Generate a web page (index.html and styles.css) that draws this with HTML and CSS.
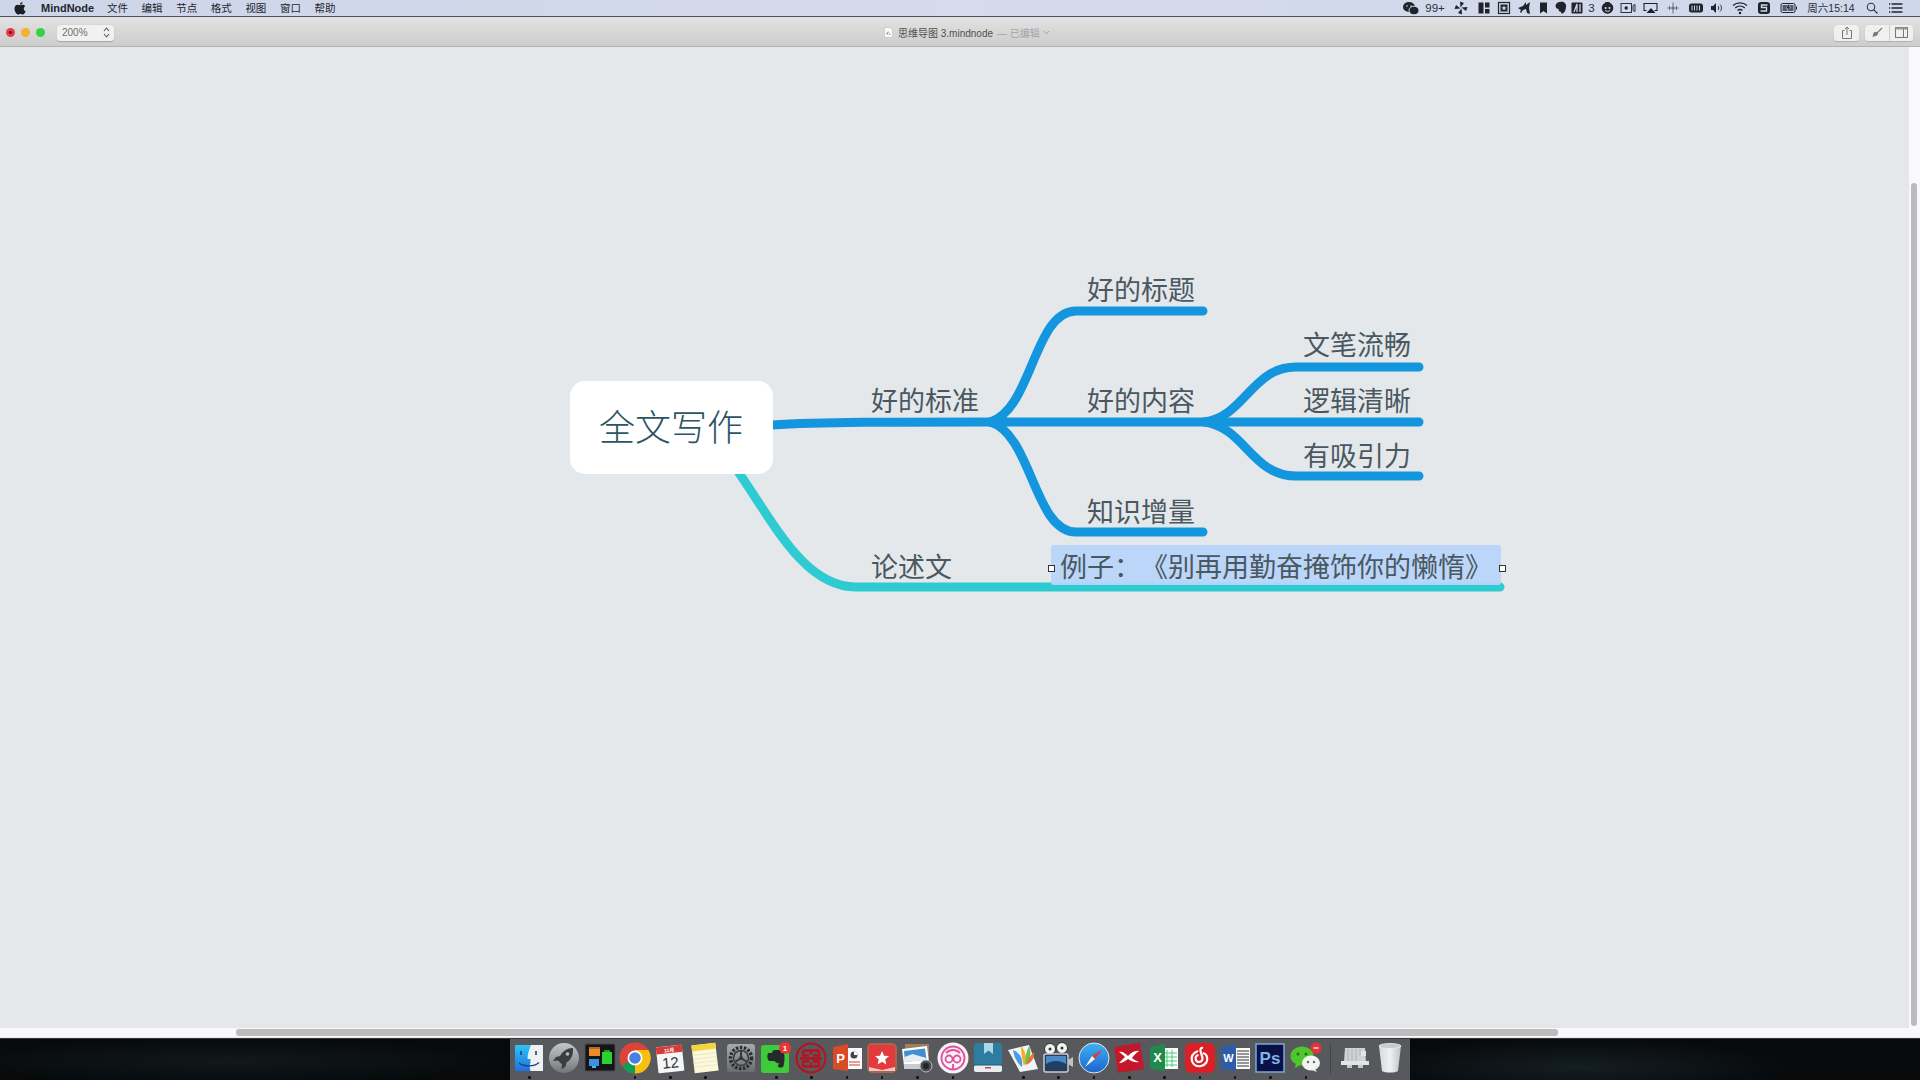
FILE: index.html
```html
<!DOCTYPE html>
<html lang="zh-CN">
<head>
<meta charset="utf-8">
<title>MindNode</title>
<link rel="stylesheet" href="styles.css">
</head>
<body>
<div class="screen">
  <header class="menubar">
    <svg class="apple" width="12" height="14" viewBox="0 0 24 28"><path fill="#1c1e26" d="M17 2c0 2.500-2.200 5.500-5 5.300C11.700 4.600 14.300 2 17 2zM12.200 8.600c1.300 0 2.800-1.200 5-1.200 2.300 0 4.200 1.100 5.300 2.900-4.300 2.500-3.600 8.400.8 10.100-1.200 3-3.500 6.600-5.700 6.600-1.700 0-2.400-1.100-4.600-1.100s-3 1.100-4.600 1.100C5.200 26.900 1 20.800 1 15.300c0-5 3.200-7.800 6.400-7.800 2 0 3.600 1.100 4.800 1.100z"/></svg>
    <span class="menu-app">MindNode</span>
    <nav class="menu-items"><span>文件</span><span>编辑</span><span>节点</span><span>格式</span><span>视图</span><span>窗口</span><span>帮助</span></nav>
    <div class="status">
      <svg width="22" height="16" viewBox="-11 -8 22 16"><ellipse cx="-2" cy="-1" rx="6" ry="5" fill="#20232b"/><ellipse cx="3" cy="2.500" rx="5" ry="4.300" fill="#20232b" stroke="#cdd5e8"/><circle cx="-4" cy="-2" r=".8" fill="#cdd5e8"/><circle cx="0" cy="-2" r=".8" fill="#cdd5e8"/></svg>
      <span class="st-text st-99">99+</span>
      <svg width="26" height="16" viewBox="-13 -8 26 16"><g fill="#20232b"><path d="M-.5-.5L-1-6.500 3-5z"/><path d="M.5-.5L6.500-1 5 3z"/><path d="M.5.500L1 6.500-3 5z"/><path d="M-.5.500L-6.500 1-5-3z"/></g></svg>
      <svg width="20" height="16" viewBox="-10 -8 20 16"><path fill="#20232b" d="M-5.500-5.500h5v11h-5zM1-5.500h4.500v5H1zM1 1h4.500v4.500H1z"/></svg>
      <svg width="20" height="16" viewBox="-10 -8 20 16"><rect x="-5.500" y="-5.500" width="11" height="11" fill="none" stroke="#20232b" stroke-width="1.200"/><rect x="-3.500" y="-3.500" width="7" height="7" fill="#20232b"/><path fill="#cdd5e8" d="M0-2.500l.8 1.700 1.700.2-1.300 1.100.4 1.700L0 1.300l-1.600.9.400-1.700-1.300-1.100 1.700-.2z"/></svg>
      <svg width="20" height="16" viewBox="-10 -8 20 16"><path fill="#20232b" d="M-6 0l5-2 3-4v3l4-3-1 6 1 6-3-1-1-4-3 1-2 3-1-1 1-2z"/></svg>
      <svg width="19" height="16" viewBox="-9.500 -8 19 16"><path fill="#20232b" d="M-3.500-5.500h7v11l-3.500-2.500-3.500 2.500z"/></svg>
      <svg width="15" height="16" viewBox="-7.500 -8 15 16"><path fill="#20232b" d="M-5-3c1-3 5-4 8-3 2 1 3 3 2.500 5C5 3 4 5 2 5.500c-1.500.3-2-.8-1-1.500-2 0-3-1-3-3-1.500 0-3-1-3-4z"/></svg>
      <svg width="18" height="16" viewBox="-9 -8 18 16"><rect x="-5.500" y="-5.500" width="11" height="11" rx="1" fill="#20232b"/><path d="M-3 4L0-4v8M3-4v8" stroke="#cdd5e8" stroke-width="1.300" fill="none"/></svg>
      <span class="st-text st-3">3</span>
      <svg width="21" height="16" viewBox="-10.500 -8 21 16"><circle r="5.800" fill="#20232b"/><circle cx="-1.800" cy="0" r="1.100" fill="#cdd5e8"/><circle cx="2" cy="0" r="1.100" fill="#cdd5e8"/><path d="M-2.500 2.500c1 1 4 1 5 0" stroke="#cdd5e8" fill="none"/><path d="M-2-6l2 2 2-2" fill="#20232b" stroke="#20232b"/></svg>
      <svg width="20" height="16" viewBox="-10 -8 20 16"><rect x="-7" y="-4.500" width="10.500" height="9" fill="none" stroke="#30333c"/><circle cx="-1.800" r="1.700" fill="#20232b"/><path d="M5-2.500l2-1v7l-2-1z" fill="none" stroke="#30333c"/></svg>
      <svg width="26" height="16" viewBox="-13 -8 26 16"><path d="M-4 2.500h-2.500v-7h13v7H4" fill="none" stroke="#20232b" stroke-width="1.100" transform="translate(-.5 0)"/><path fill="#20232b" d="M0 0l4.500 5h-9z"/></svg>
      <svg width="18" height="16" viewBox="-9 -8 18 16"><path d="M0-5.500v11M-3.500-2v4M3.500-2v4M-5.500 0h11" stroke="#6b7180" stroke-width="1"/><circle r="1.500" fill="#6b7180"/></svg>
      <svg width="28" height="16" viewBox="-14 -8 28 16"><rect x="-7" y="-4.500" width="14" height="9" rx="2.500" fill="#20232b"/><path d="M-4-2.500v5M-1.500-2.500v5M1-2.500v5M3.500-2.500v5" stroke="#cdd5e8"/></svg>
      <svg width="14" height="16" viewBox="-7 -8 14 16"><path fill="#20232b" d="M-6-2h2l3-3v10l-3-3h-2z"/><path d="M1-2c1 1 1 3 0 4M3-3.500c2 2 2 5 0 7" fill="none" stroke="#20232b" stroke-width=".9"/></svg>
      <svg width="32" height="16" viewBox="-16 -8 32 16"><g fill="none" stroke="#20232b" stroke-width="1.300"><path d="M-7-2.500c4-3.500 10-3.500 14 0"/><path d="M-4.800 0c2.800-2.400 6.800-2.400 9.600 0"/><path d="M-2.500 2.500c1.500-1.200 3.500-1.200 5 0"/></g><circle cy="5" r="1.300" fill="#20232b"/></svg>
      <svg width="16" height="16" viewBox="-8 -8 16 16"><rect x="-6" y="-6" width="12" height="12" rx="3" fill="#20232b"/><path d="M3.500-3h-6v2.500h5V3h-6" fill="none" stroke="#cdd5e8" stroke-width="1.400"/></svg>
      <svg width="34" height="16" viewBox="-17 -8 34 16"><rect x="-8" y="-4.500" width="14" height="9" rx="1.500" fill="none" stroke="#20232b"/><rect x="-6.500" y="-3" width="11" height="6" fill="#565a66"/><path d="M-1-3.500L-3 .5h2l-1 3 4-4.500H0l1-2.500z" fill="#20232b" stroke="#cdd5e8" stroke-width=".5"/><path d="M7-1.500h1v3H7z" fill="#20232b"/></svg>
      <span class="st-text st-clock">周六15:14</span>
      <svg width="32" height="16" viewBox="-16 -8 32 16"><circle cx="-1" cy="-1" r="3.700" fill="none" stroke="#30333c" stroke-width="1.100"/><path d="M1.800 1.800L5.500 5.500" stroke="#30333c" stroke-width="1.200"/></svg>
      <svg width="16" height="16" viewBox="-8 -8 16 16"><path d="M-7-4h1.200M-4.500-4h11M-7 0h1.200M-4.500 0h11M-7 4h1.200M-4.500 4h11" stroke="#20232b" stroke-width="1.300"/></svg>
    </div>
  </header>

  <div class="toolbar">
    <div class="traffic"><i class="light red"></i><i class="light amber"></i><i class="light green"></i></div>
    <div class="zoom-box"><span>200%</span><svg width="7" height="11" viewBox="0 0 7 11"><path d="M1 4l2.500-3L6 4M1 7l2.500 3L6 7" fill="none" stroke="#55585c" stroke-width="1.100"/></svg></div>
    <div class="doc-title">
      <svg width="9" height="11" viewBox="0 0 9 11"><path d="M.5.500h5.500l2.500 2.500v7.500h-8z" fill="#fbfbfb" stroke="#bdbdbd" stroke-width=".6"/><path d="M3 7l1-3 1 1.500z" fill="#e8a33d"/><path d="M4 8l-2-2 1.500-.5z" fill="#3b8fd6"/><path d="M4.500 8l2-2.500-.5 2.500z" fill="#5fb54a"/></svg>
      <span class="doc-name">思维导图 3.mindnode</span><span class="doc-state">— 已编辑</span>
      <svg width="7" height="5" viewBox="0 0 7 5"><path d="M.8 1l2.700 2.700L6.200 1" fill="none" stroke="#a0a0a0"/></svg>
    </div>
    <div class="tool-right">
      <div class="tool-btn btn-share"><svg width="12" height="13" viewBox="0 0 12 13"><path d="M3.500 4.500H1.500v8h9v-8h-2M6 9V1M4 3l2-2 2 2" fill="none" stroke="#7a7a7a"/></svg></div>
      <div class="tool-group">
        <div class="tool-btn btn-brush"><svg width="12" height="12" viewBox="0 0 12 12"><path d="M11 1L6 6" stroke="#777" stroke-width="1.100"/><path d="M6.500 5.500c1 1 .5 2-.3 2.800-1 1-3 .8-4.700 1.700.5-1.500.4-3.200 1.400-4.500 1-1 2.600-1 3.600 0z" fill="#7c7c7c"/></svg></div>
        <div class="tool-btn btn-panel"><svg width="13" height="11" viewBox="0 0 13 11"><rect x=".5" y=".5" width="12" height="10" fill="none" stroke="#777"/><rect x=".5" y=".5" width="12" height="2" fill="#999"/><path d="M8.500 2v8" stroke="#777"/></svg></div>
      </div>
    </div>
  </div>

  <div class="workspace">
    <main class="canvas">
      <svg class="links" width="1909" height="981" viewBox="0 47 1909 981">
        <g fill="none" stroke-linecap="round" stroke-width="9">
          <path class="teal" d="M737 470C775 525 805 587 856 587H1500"/>
          <path class="blue" d="M772 425C830 421 900 422 1203 422"/>
          <path class="blue" d="M990 422C1032 410 1034 311 1076 311H1203"/>
          <path class="blue" d="M990 422C1032 434 1034 532 1076 532H1203"/>
          <path class="blue" d="M1205 422C1245 416 1252 367 1296 367H1419"/>
          <path class="blue" d="M1205 422H1419"/>
          <path class="blue" d="M1205 422C1245 428 1252 476 1296 476H1419"/>
        </g>
      </svg>
      <div class="selection"></div>
      <div class="root-node"><span>全文写作</span></div>
      <div class="node n-standard">好的标准</div>
      <div class="node n-title">好的标题</div>
      <div class="node n-content">好的内容</div>
      <div class="node n-knowledge">知识增量</div>
      <div class="node n-writing">文笔流畅</div>
      <div class="node n-logic">逻辑清晰</div>
      <div class="node n-attract">有吸引力</div>
      <div class="node n-essay">论述文</div>
      <div class="node n-example">例子：《别再用勤奋掩饰你的懒惰》</div>
      <i class="handle h-left"></i><i class="handle h-right"></i>
    </main>
    <div class="vscroll"><div class="vthumb"></div></div>
  </div>
  <div class="hscroll"><div class="hthumb"></div></div>

  <footer class="desktop">
    <div class="dock">
      <div class="app on"><svg width="32" height="32" viewBox="0 0 32 32"><defs><linearGradient id="f1" x1="0" y1="0" x2="0" y2="1"><stop offset="0" stop-color="#2cc4f5"/><stop offset="1" stop-color="#1f6fe0"/></linearGradient></defs><rect x="2" y="3" width="28" height="26" fill="#eef1f4"/><path d="M2 3h16c-2 5-3.500 9-3.500 14h3v3c-1 3-1 6 0 9H2z" fill="url(#f1)"/><path d="M8 9v4M23 9v4" stroke="#1b3f70" stroke-width="1.600"/><path d="M6 21c5 4 15 4 20-.5" stroke="#1b3f70" fill="none" stroke-width="1.300"/></svg></div>
      <div class="app"><svg width="32" height="32" viewBox="0 0 32 32"><defs><linearGradient id="l1" x1="0" y1="0" x2="0" y2="1"><stop offset="0" stop-color="#c4c6c8"/><stop offset="1" stop-color="#75787b"/></linearGradient></defs><circle cx="16" cy="16" r="15" fill="url(#l1)"/><path d="M25 6c-6 0-10 3-13 8l-4 1-3 4 5-.5 4 4-.5 5 4-3 1-4c5-3 7-8 6.500-14.500z" fill="#3b3d40"/><circle cx="19.500" cy="12" r="1.800" fill="#b8babc"/></svg></div>
      <div class="app"><svg width="32" height="32" viewBox="0 0 32 32"><rect x="1" y="2" width="30" height="27" rx="1.500" fill="#141517" stroke="#4a4b4e"/><rect x="5" y="7" width="11" height="7" fill="#e98a2b"/><rect x="5" y="5" width="11" height="2" fill="#b86a20"/><rect x="5" y="17" width="10" height="7" fill="#3b90e0"/><rect x="18" y="10" width="10" height="12" fill="#2bd12f"/><rect x="20" y="8" width="6" height="2" fill="#1e9a22"/><rect x="8" y="24" width="4" height="2" fill="#5fb0ee"/></svg></div>
      <div class="app on"><svg width="32" height="32" viewBox="0 0 32 32"><circle cx="16" cy="16" r="15.500" fill="#db4437"/><path d="M16 16L2.600 23.800A15.500 15.500 0 0 0 16 31.500c2.800 0 3-1 4-1.500z" fill="#0f9d58"/><path d="M16 8h13.400a15.500 15.500 0 0 1-13.400 23.500z" fill="#f4c20d"/><path d="M2.600 8.300A15.500 15.500 0 0 1 16 .5a15.500 15.500 0 0 1 13.400 7.500H16c-4 0-7 2-8 5z" fill="#db4437"/><circle cx="16" cy="16" r="7.500" fill="#fff"/><circle cx="16" cy="16" r="5.800" fill="#4a7fe0"/></svg></div>
      <div class="app on"><svg width="32" height="32" viewBox="0 0 32 32"><g transform="rotate(-6 16 16)"><rect x="3" y="4" width="26" height="26" rx="1" fill="#f6f6f6"/><rect x="3" y="4" width="26" height="7" fill="#d93a33"/><text class="cal-month" x="16" y="10" text-anchor="middle">11月</text><text class="cal-day" x="16" y="26" text-anchor="middle">12</text></g></svg></div>
      <div class="app on"><svg width="32" height="32" viewBox="0 0 32 32"><g transform="rotate(-7 16 16)"><rect x="4" y="2" width="24" height="28" fill="#fbf8dc"/><rect x="4" y="2" width="24" height="6" fill="#f5d53f"/><path d="M4 12h24M4 16h24M4 20h24M4 24h24" stroke="#e6e1b8" stroke-width=".7"/></g></svg></div>
      <div class="app"><svg width="32" height="32" viewBox="0 0 32 32"><defs><linearGradient id="s1" x1="0" y1="0" x2="0" y2="1"><stop offset="0" stop-color="#a8abae"/><stop offset="1" stop-color="#6a6d70"/></linearGradient></defs><rect x="2" y="2" width="28" height="28" rx="3" fill="url(#s1)"/><circle cx="16" cy="16" r="10.500" fill="none" stroke="#2b2c2e" stroke-width="3.500" stroke-dasharray="2.500 1.500"/><circle cx="16" cy="16" r="7.500" fill="none" stroke="#37383a" stroke-width="1.500"/><path d="M16 16V9M16 16l-6 4M16 16l6 4" stroke="#37383a" stroke-width="2"/><circle cx="16" cy="16" r="2" fill="#37383a"/></svg></div>
      <div class="app on"><svg width="32" height="32" viewBox="0 0 32 32"><rect x="1" y="3" width="28" height="28" rx="3" fill="#3ecb3a"/><path d="M8 11h4c0-2 1-3 3-3h5c3 0 4.500 3 4.500 7s-.5 9-1.500 10c-2 1-4 1-5-.5-.5-1.500.5-3 2.500-2.500-2-1-5-1-6-3H9c-2-2-2-5-1-8z" fill="#24292b"/><circle cx="25" cy="6" r="6" fill="#e93436"/><text class="badge-text" x="25" y="9" text-anchor="middle">1</text></svg></div>
      <div class="app on"><svg width="32" height="32" viewBox="0 0 32 32"><circle cx="16" cy="16" r="14.500" fill="#58595c" stroke="#b8101f" stroke-width="2"/><path d="M8 8.500h16M8 8.500v5h6M24 8.500v5h-6M5 16.500h22M8 24.500h16M8 24.500v-5h6M24 24.500v-5h-6" fill="none" stroke="#b8101f" stroke-width="2.300"/><path d="M16 8.500v4M16 20.500v4" stroke="#b8101f" stroke-width="2.300"/></svg></div>
      <div class="app on"><svg width="32" height="32" viewBox="0 0 32 32"><rect x="14" y="6" width="17" height="21" fill="#fafafa"/><path d="M2 5l15-3v27L2 27z" fill="#d94a26"/><text class="ppt-p" x="9.500" y="21" text-anchor="middle">P</text><circle cx="23" cy="13" r="3.500" fill="#444"/><path d="M23 13V9.500a3.500 3.500 0 0 1 3.500 3.500z" fill="#fff"/><path d="M18 20h11M18 23h11" stroke="#c43" stroke-width="1.200"/></svg></div>
      <div class="app on"><svg width="32" height="32" viewBox="0 0 32 32"><rect x="1" y="1" width="30" height="30" rx="5" fill="#a9664a"/><rect x="3" y="3" width="26" height="26" rx="2" fill="#e23a3e"/><path d="M16 9l2 4.700 5 .4-3.800 3.300 1.200 5L16 19.700l-4.400 2.700 1.200-5L9 14.100l5-.4z" fill="#fff"/><path d="M3 25l13 3 13-3v4H3z" fill="#fff" opacity=".7"/></svg></div>
      <div class="app on"><svg width="32" height="32" viewBox="0 0 32 32"><rect x="4" y="2" width="24" height="20" fill="#9d805a"/><path d="M1 7l25-3 2 17-25 3z" fill="#fff"/><path d="M3 9l21-2.500 1.500 11L4 20z" fill="#3f8fd2"/><path d="M3.500 15l8-3 14 4 0 2L4 20z" fill="#e6edf2"/><rect x="3" y="22" width="20" height="5" fill="#c9ccd0"/><circle cx="25" cy="24" r="6" fill="#4a4c4f" stroke="#b9bbbe"/><circle cx="25" cy="24" r="3" fill="#22262b"/></svg></div>
      <div class="app on"><svg width="32" height="32" viewBox="0 0 32 32"><circle cx="16" cy="16" r="15.500" fill="#f7f2f6"/><g fill="none" stroke="#e0509f" stroke-width="1.800"><circle cx="16" cy="16" r="11.500"/><circle cx="12" cy="17" r="3.500"/><circle cx="20" cy="17" r="3.500"/><path d="M9 11c4-4 10-4 14 0M16 22v5"/></g></svg></div>
      <div class="app"><svg width="32" height="32" viewBox="0 0 32 32"><rect x="2" y="1" width="28" height="29" rx="3" fill="#2f7d9e"/><rect x="2" y="23" width="28" height="7" rx="2" fill="#e8edf0"/><path d="M2 23h28" stroke="#1f5e7a"/><path d="M12 1h9v11l-4.500-3.500L12 12z" fill="#a9d8ea"/><rect x="13" y="25" width="6" height="1.500" fill="#c44"/></svg></div>
      <div class="app on"><svg width="32" height="32" viewBox="0 0 32 32"><path d="M1 8l21-5 9 24-18 3z" fill="#f2f4f6"/><path d="M6 8c1 7 4 13 9 17 1-7-1-14-9-17z" fill="#4a9de0"/><path d="M14 4c0 6 1 13 3 20 3-6 3-13-3-20z" fill="#f0b02b"/><path d="M22 4c-3 6-4 13-4 19 5-4 7-11 4-19z" fill="#6fc04a"/><path d="M27 10c-4 4-7 9-8 13 5-2 9-7 8-13z" fill="#e76f34"/></svg></div>
      <div class="app on"><svg width="32" height="32" viewBox="0 0 32 32"><circle cx="8" cy="7" r="5.500" fill="#f4f4f4" stroke="#333"/><circle cx="20" cy="6" r="5.500" fill="#f4f4f4" stroke="#333"/><circle cx="8" cy="7" r="1.500" fill="#333"/><circle cx="20" cy="6" r="1.500" fill="#333"/><rect x="2" y="12" width="24" height="18" rx="2" fill="#2f3a52" stroke="#c8ccd2" stroke-width="1.500"/><rect x="4" y="14" width="20" height="13" fill="#4a8ac9"/><path d="M4 22c6-4 14-4 20 0v5H4z" fill="#1f3f66"/><path d="M26 18l5-3v10l-5-3z" fill="#bfc3c7"/></svg></div>
      <div class="app on"><svg width="32" height="32" viewBox="0 0 32 32"><defs><linearGradient id="sf" x1="0" y1="0" x2="0" y2="1"><stop offset="0" stop-color="#3fb2f3"/><stop offset="1" stop-color="#1a63cf"/></linearGradient></defs><circle cx="16" cy="16" r="15" fill="url(#sf)" stroke="#e6e6e6"/><path d="M25 7L14 14l3 3z" fill="#e33a33"/><path d="M7 25l7-11 3 3z" fill="#f2f2f2"/></svg></div>
      <div class="app on"><svg width="32" height="32" viewBox="0 0 32 32"><path d="M1 5l26-4 4 26-26 4z" fill="#c3182c"/><path d="M6 10c3-1 6 1 9 4 3-3 7-6 11-5-3 2-5 4-7 7 2 2 5 3 7 4-4 1-8-1-11-3-3 2-5 4-9 4 2-2 4-4 6-6-2-2-4-4-6-5z" fill="#fff"/></svg></div>
      <div class="app on"><svg width="32" height="32" viewBox="0 0 32 32"><rect x="14" y="6" width="16" height="21" fill="#fafafa"/><path d="M19 8v17M24 8v17M15 11h14M15 15h14M15 19h14M15 23h14" stroke="#3c6" stroke-width=".9"/><path d="M2 5l15-3v27L2 27z" fill="#1f8a4c"/><text class="ppt-p" x="9.500" y="20" text-anchor="middle">X</text></svg></div>
      <div class="app on"><svg width="32" height="32" viewBox="0 0 32 32"><rect x="1" y="1" width="30" height="30" rx="6" fill="#dc1f26"/><path d="M19 6c-2-.5-3 1-2.500 3l2 7a3.500 3.500 0 1 1-4-3M14 9c-5 2-7 6-6 10 1 4 5 6 9 5 5-1 7-5 6-9-.5-2-2-3.500-4-4" fill="none" stroke="#fff" stroke-width="2.200"/></svg></div>
      <div class="app on"><svg width="32" height="32" viewBox="0 0 32 32"><rect x="14" y="6" width="17" height="21" fill="#fafafa"/><path d="M18 9h12M18 12h12M18 15h12M18 18h12M18 21h12M18 24h12" stroke="#333" stroke-width="1.100"/><path d="M2 5l15-3v27L2 27z" fill="#2d5ca8"/><text class="ppt-w" x="9.500" y="20" text-anchor="middle">W</text></svg></div>
      <div class="app on"><svg width="32" height="32" viewBox="0 0 32 32"><rect x="2" y="2" width="28" height="28" fill="#0b1145" stroke="#78a9dc" stroke-width="1.500"/><text class="ps-text" x="16" y="22" text-anchor="middle">Ps</text></svg></div>
      <div class="app on"><svg width="32" height="32" viewBox="0 0 32 32"><ellipse cx="12" cy="14" rx="11.500" ry="9.500" fill="#4fc52f"/><path d="M6 21l-1 5 5-3z" fill="#4fc52f"/><circle cx="8" cy="12" r="1.500" fill="#2a6e1c"/><circle cx="16" cy="12" r="1.500" fill="#2a6e1c"/><ellipse cx="21" cy="21" rx="9" ry="7.500" fill="#f2f4f1"/><path d="M25 27l2 3-5-2z" fill="#f2f4f1"/><circle cx="18" cy="20" r="1.200" fill="#666"/><circle cx="24" cy="20" r="1.200" fill="#666"/><circle cx="26" cy="6" r="5.500" fill="#e3323a"/><path d="M23.500 6h5" stroke="#fff" stroke-width="1.200"/></svg></div>
      <span class="dock-sep"></span>
      <div class="app"><svg width="32" height="32" viewBox="0 0 32 32"><path d="M6 6h20l1 14H5z" fill="#d0d2d4"/><path d="M9 7v12M13 7v12M17 7v12M21 7v6" stroke="#a5a7aa" stroke-width=".8"/><rect x="22" y="9" width="5" height="5" fill="#e4e4e4"/><path d="M2 19h28v4H2z" fill="#e1e3e5"/><path d="M8 23h5v3H8zM19 23h5v3h-5z" fill="#c4c6c8"/></svg></div>
      <div class="app"><svg width="32" height="32" viewBox="0 0 32 32"><defs><linearGradient id="tr" x1="0" y1="0" x2="1" y2="0"><stop offset="0" stop-color="#d6d8da"/><stop offset=".5" stop-color="#f0f1f2"/><stop offset="1" stop-color="#bfc1c4"/></linearGradient></defs><path d="M5 4l3 25c3 2 13 2 16 0l3-25z" fill="url(#tr)"/><ellipse cx="16" cy="4" rx="11" ry="2.500" fill="#c8cacd" stroke="#eceded" stroke-width=".8"/></svg></div>
    </div>
  </footer>
</div>
</body>
</html>
```
FILE: styles.css
```css
* { box-sizing: border-box; }
html, body { margin: 0; padding: 0; width: 1920px; height: 1080px; overflow: hidden; }
body { font-family: "Liberation Sans", "Noto Sans CJK SC", sans-serif; }
.screen { display: flex; flex-direction: column; width: 1920px; height: 1080px; }

.menubar {
  height: 17px; flex: none; display: flex; align-items: center;
  padding-left: 14px; padding-bottom: 1px;
  background: linear-gradient(90deg, #cdd5e8, #d5daec 50%, #cfd8ea);
  border-bottom: 1px solid #4b4f61;
  font-size: 10.5px; color: #22252e; line-height: 16px;
}
.apple { flex: none; }
.menu-app { margin-left: 15px; font-weight: 700; font-size: 11px; width: 66px; }
.menu-items { display: flex; gap: 13.600px; }
.status { margin-left: auto; margin-right: 16px; display: flex; align-items: center; height: 16px; }
.status svg { display: block; flex: none; }
.st-text { color: #2b2e38; text-align: center; flex: none; font-size: 10.5px; }
.st-99 { width: 26px; font-size: 11.500px; }
.st-3 { width: 11px; font-size: 11.500px; }
.st-clock { width: 50px; }

.toolbar {
  height: 30px; flex: none; display: flex; align-items: center; position: relative;
  background: linear-gradient(#e2e2e2, #cdcdcd);
  border-bottom: 1px solid #b3b3b3;
  padding: 2px 7px 0 6px;
}
.traffic { display: flex; gap: 6px; }
.light { display: block; width: 9px; height: 9px; border-radius: 50%; }
.red { background: radial-gradient(circle, #7a1020 18%, #ea3b4c 35%); }
.amber { background: #f5b02e; }
.green { background: #37d146; }
.zoom-box {
  margin-left: 12px; width: 57px; height: 16px; border-radius: 3px; background: #f1f1f1;
  display: flex; align-items: center; justify-content: space-between; padding: 0 4px 0 5px;
  font-size: 10px; color: #6e6e6e; box-shadow: 0 .5px 1px rgba(0,0,0,.2);
}
.doc-title {
  position: absolute; left: 884px; top: 1px; height: 28px; display: flex; align-items: center;
  font-size: 10px;
}
.doc-name { color: #505050; margin-left: 5px; }
.doc-state { color: #a3a3a3; margin-left: 4px; margin-right: 3px; }
.tool-right { margin-left: auto; display: flex; gap: 6px; }
.tool-btn { height: 16px; display: flex; align-items: center; justify-content: center; background: #f0f0f0; }
.btn-share { width: 25px; border-radius: 3px; box-shadow: 0 .5px 1px rgba(0,0,0,.15); }
.tool-group { display: flex; gap: 1px; background: #cfcfcf; border-radius: 3px; box-shadow: 0 .5px 1px rgba(0,0,0,.15); overflow: hidden; }
.btn-brush { width: 24px; }
.btn-panel { width: 23px; }

.workspace { flex: 1; display: flex; min-height: 0; }
.canvas { flex: 1; position: relative; background: #e4e8eb; overflow: hidden; }
.vscroll { width: 11px; flex: none; background: #f9f8fa; position: relative; }
.vthumb { position: absolute; left: 2px; top: 136px; width: 6px; bottom: 2px; background: #bcbcbc; border-radius: 3px; }
.hscroll { height: 10px; flex: none; background: #f9f8fa; position: relative; border-bottom: 1px solid #e8e8e8; }
.hthumb { position: absolute; left: 236px; width: 1322px; top: 1px; height: 7px; border-radius: 3px; background: #bcbcbc; }

.links { position: absolute; left: 0; top: 0; display: block; }
.blue { stroke: #1496de; }
.teal { stroke: #2ecbd2; }
.root-node {
  position: absolute; left: 570px; top: 334px; width: 203px; height: 93px;
  background: #fff; border-radius: 15px; display: flex; align-items: center; justify-content: center;
  font: 300 36px/1 "Noto Sans CJK SC", sans-serif; color: #2d5463;
}
.root-node span { margin-top: -5px; margin-left: -1px; }
.node {
  position: absolute; height: 36px; white-space: nowrap;
  font: 400 27px/36px "Noto Sans CJK SC", sans-serif; color: #4a5861;
}
.n-standard { left: 871px; top: 335px; }
.n-title { left: 1087px; top: 224px; }
.n-content { left: 1087px; top: 335px; }
.n-knowledge { left: 1087px; top: 446px; }
.n-writing { left: 1303px; top: 279px; }
.n-logic { left: 1303px; top: 335px; }
.n-attract { left: 1303px; top: 390px; }
.n-essay { left: 871px; top: 501px; }
.n-example { left: 1060px; top: 501px; text-spacing-trim: space-all; font-feature-settings: "palt" 0; }
.selection { position: absolute; left: 1051px; top: 498px; width: 450px; height: 40px; background: rgba(184, 213, 250, .95); border-radius: 3px; }
.handle { position: absolute; width: 7px; height: 7px; background: #fff; border: 1px solid #333; top: 518px; }
.h-left { left: 1048px; }
.h-right { left: 1499px; }

.desktop {
  flex: none; height: 42px; display: flex; justify-content: center; position: relative;
  background:
    radial-gradient(ellipse 220px 30px at 1580px 28px, rgba(40,60,66,.4), transparent),
    radial-gradient(ellipse 300px 24px at 230px 22px, rgba(30,48,48,.4), transparent),
    #07090b;
  border-top: 1px solid #3a3a3c;
}
.dock {
  width: 900px; height: 41px; background: #58595c;
  display: flex; align-items: flex-start; padding: 3px 0 0 3px; gap: 3.300px;
}
.app { width: 32px; height: 32px; flex: none; position: relative; }
.app svg { display: block; }
.app.on::after { content: ""; position: absolute; left: 15px; top: 34px; width: 2.500px; height: 2.500px; border-radius: 50%; background: #111; }
.dock-sep { width: 1px; height: 30px; margin: 2px 5px 0 5px; background: #444548; flex: none; }
.cal-month { font: 700 5px "Liberation Sans", "Noto Sans CJK SC", sans-serif; fill: #fff; }
.cal-day { font: 400 15px "Liberation Sans", sans-serif; fill: #333; }
.badge-text { font: 700 8px "Liberation Sans", sans-serif; fill: #fff; }
.ppt-p { font: 700 13px "Liberation Sans", sans-serif; fill: #fff; }
.ppt-w { font: 700 11px "Liberation Sans", sans-serif; fill: #fff; }
.ps-text { font: 700 17px "Liberation Sans", sans-serif; fill: #7db4ea; }
```
